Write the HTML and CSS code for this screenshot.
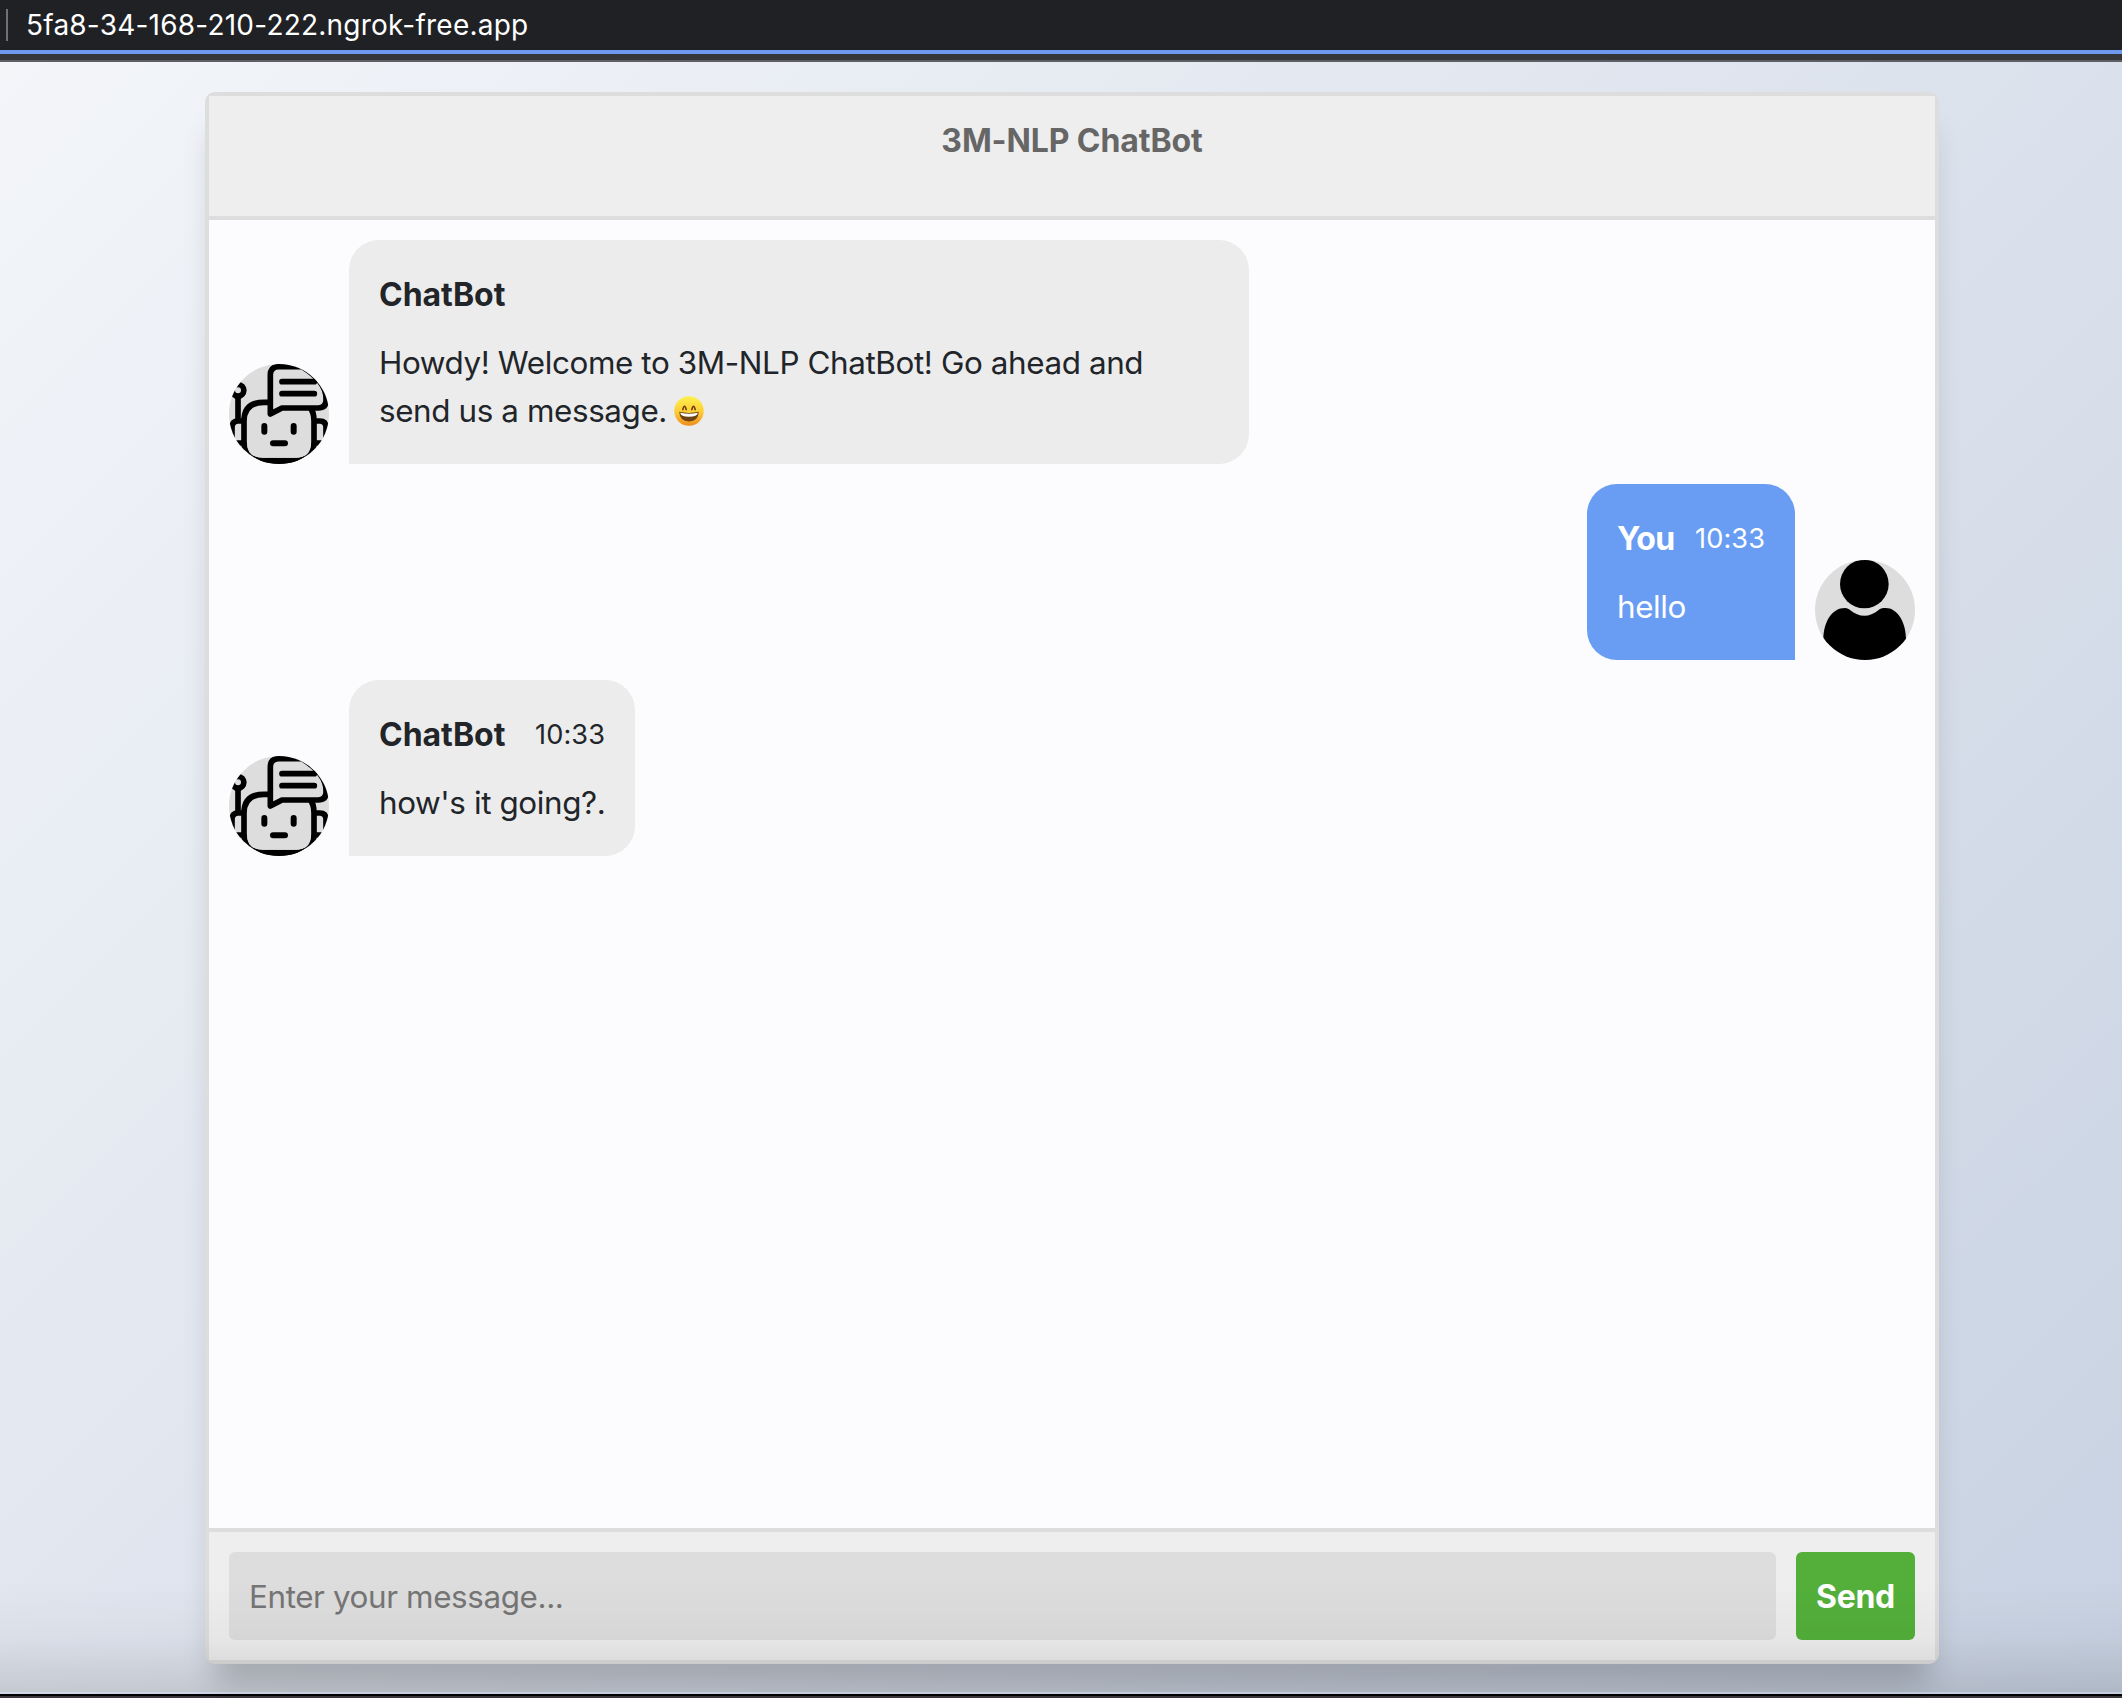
FILE: index.html
```html
<!DOCTYPE html>
<html lang="en">
<head>
<meta charset="utf-8">
<title>3M-NLP ChatBot</title>
<link rel="stylesheet" href="styles.css">
</head>
<body>
<svg class="sprites" aria-hidden="true">
  <symbol id="bot" viewBox="57 57 300 300">
    <g fill="none" stroke="#000" stroke-width="17" stroke-linecap="round" stroke-linejoin="round">
      <path d="M97 228H85Q66 228 66 247V294H102M317 228H329Q348 228 348 247V294H312"/>
      <path d="M84 160V222"/>
      <circle cx="84" cy="136" r="17.5"/>
      <path fill="#ddd" d="M162 172Q102 172 102 228V290Q102 347 158 347H256Q312 347 312 290V228Q312 172 262 172Z"/>
      <path stroke-width="30" d="M70 302Q110 362 207 362T344 302"/>
      <path fill="#ddd" stroke="none" d="M111 220H303V292Q303 338 256 338H158Q111 338 111 292Z"/>
      <path fill="#ddd" d="M181 207V90Q181 65 206 65H276Q348 110 348 160V166Q348 189 325 189H216Z"/>
      <path d="M216 110H313M216 146H313"/>
      <path stroke-width="18" d="M163 243V260M251 243V260M189 295H225"/>
    </g>
  </symbol>
  <symbol id="person" viewBox="0 0 300 300">
    <circle cx="148" cy="72" r="73"/>
    <path d="M25 300V235C27 185 50 144 90 144C98 144 101 147 105 150C133 173 163 173 191 150C196 146 200 144 212 144C247 144 272 185 273 235V300Z"/>
  </symbol>
</svg>

<div class="browser-bar"><span class="divider"></span><span class="url">5fa8-34-168-210-222.ngrok-free.app</span></div>
<div class="bar-edge"></div>

<main class="page">
  <section class="msger">
    <header class="msger-header">3M-NLP ChatBot</header>
    <div class="msger-chat">
      <article class="msg left">
        <svg class="avatar"><use href="#bot"/></svg>
        <div class="bubble">
          <div class="info"><b class="name">ChatBot</b></div>
          <div class="text">Howdy! Welcome to 3M-NLP ChatBot! Go ahead and send us a message.
            <svg class="emoji" viewBox="0 0 30 30" role="img" aria-label="smile">
              <defs>
                <linearGradient id="face" x1="0" y1="0" x2="0" y2="1"><stop offset="0" stop-color="#fff04e"/><stop offset=".55" stop-color="#fdcb35"/><stop offset="1" stop-color="#ee8d18"/></linearGradient>
              </defs>
              <circle cx="15" cy="15" r="14.7" fill="url(#face)"/>
              <path d="M8.8 13.6Q10.5 7 12.2 13.6M17.8 13.6Q19.5 7 21.2 13.6" fill="none" stroke="#6b3c0a" stroke-width="1.6" stroke-linecap="round"/>
              <path d="M5.2 15.8Q15 18 24.8 15.8Q24.3 25.5 15 25.5T5.2 15.8Z" fill="#704314"/>
              <path d="M6.2 16.7Q15 18.7 23.8 16.7Q23.5 20.8 15 20.8T6.2 16.7Z" fill="#fff"/>
            </svg>
          </div>
        </div>
      </article>
      <article class="msg right">
        <svg class="avatar"><use href="#person"/></svg>
        <div class="bubble">
          <div class="info"><b class="name">You</b><span class="time">10:33</span></div>
          <div class="text">hello</div>
        </div>
      </article>
      <article class="msg left">
        <svg class="avatar"><use href="#bot"/></svg>
        <div class="bubble reply">
          <div class="info"><b class="name">ChatBot</b><span class="time">10:33</span></div>
          <div class="text">how's it going?.</div>
        </div>
      </article>
    </div>
    <form class="msger-form">
      <input class="msger-input" type="text" placeholder="Enter your message...">
      <button class="msger-send" type="button">Send</button>
    </form>
  </section>
</main>
<div class="bottom-edge"></div>
</body>
</html>
```
FILE: styles.css
```css
* { box-sizing: border-box; }

body {
  margin: 0;
  height: 1698px;
  display: flex;
  flex-direction: column;
  overflow: hidden;
  font: 31.4px/48px Inter, "Liberation Sans", sans-serif;
  letter-spacing: -0.39px;
  color: #212529;
}

.sprites { position: absolute; width: 0; height: 0; }

.browser-bar {
  height: 50px;
  flex: none;
  display: flex;
  align-items: center;
  gap: 18px;
  padding: 0 0 1px 6px;
  background: #202124;
  color: #fff;
  font-size: 28px;
  letter-spacing: 0.22px;
}
.divider { width: 2px; height: 32px; background: #707174; }

.bar-edge {
  height: 12px;
  flex: none;
  background: #35363a;
  border-top: 4px solid #6d99ee;
  border-bottom: 2px solid #5e5f64;
}

.page {
  position: relative;
  flex: 1;
  display: flex;
  padding: 30px 183px 30px 205px;
  background: linear-gradient(135deg, #f3f5f9 0%, #c8d2e2 100%);
}
/* shade that falls over the foot of the page */
.page::after {
  content: "";
  position: absolute;
  inset: auto 0 0;
  height: 110px;
  background: linear-gradient(rgba(0,0,0,0), rgba(0,0,0,.03) 50%, rgba(0,0,0,.12));
  border-bottom: 2px solid rgba(190,200,220,.5);
  pointer-events: none;
}

.msger {
  flex: 1;
  display: flex;
  flex-direction: column;
  border: 4px solid #ddd;
  border-radius: 10px;
  background: #fcfcfe;
  box-shadow: 0 30px 30px -10px rgba(0,0,0,.2);
}

.msger-header {
  height: 124px;
  padding: 21px 20px 19px;
  border-bottom: 4px solid #ddd;
  background: #eee;
  color: #666;
  text-align: center;
  font-size: 32px;
  font-weight: 700;
  letter-spacing: -0.1px;
}

.msger-chat {
  flex: 1;
  display: flex;
  flex-direction: column;
  gap: 20px;
  padding: 20px;
}

.msg { display: flex; align-items: flex-end; gap: 20px; }
.msg.right { flex-direction: row-reverse; }

.avatar { flex: none; width: 100px; height: 100px; border-radius: 50%; background: #ddd; }

.bubble {
  max-width: 900px;
  padding: 31px 30px 29px;
  border-radius: 30px;
  background: #ececec;
}
.left .bubble { border-bottom-left-radius: 0; }
.right .bubble { width: 208px; border-bottom-right-radius: 0; background: #699df3; color: #fff; }
.bubble.reply { width: 286px; }
.reply .text { white-space: nowrap; }

.info { display: flex; justify-content: space-between; align-items: center; margin-bottom: 20px; }
.name { font-size: 32px; font-weight: 700; letter-spacing: -0.02px; }
.right .name { letter-spacing: -0.6px; }
.time { font-size: 27.2px; letter-spacing: 0.05px; }
.emoji { width: 30px; height: 30px; vertical-align: -4px; margin-left: -1px; }

.msger-form {
  display: flex;
  gap: 20px;
  padding: 20px;
  border-top: 4px solid #ddd;
  background: #eee;
}
.msger-input, .msger-send {
  height: 88px;
  border: 0;
  border-radius: 6px;
  font: inherit;
  letter-spacing: inherit;
}
.msger-input { flex: 1; padding: 21px 20px 19px; background: #ddd; }
.msger-input::placeholder { color: #757575; }
.msger-send { width: 119px; padding: 2px 0 0; background: #53af3a; color: #fff; font-size: 32px; font-weight: 700; letter-spacing: -0.3px; }

.bottom-edge { height: 4px; flex: none; background: #3b373c; border-top: 2px solid #000; }
```
